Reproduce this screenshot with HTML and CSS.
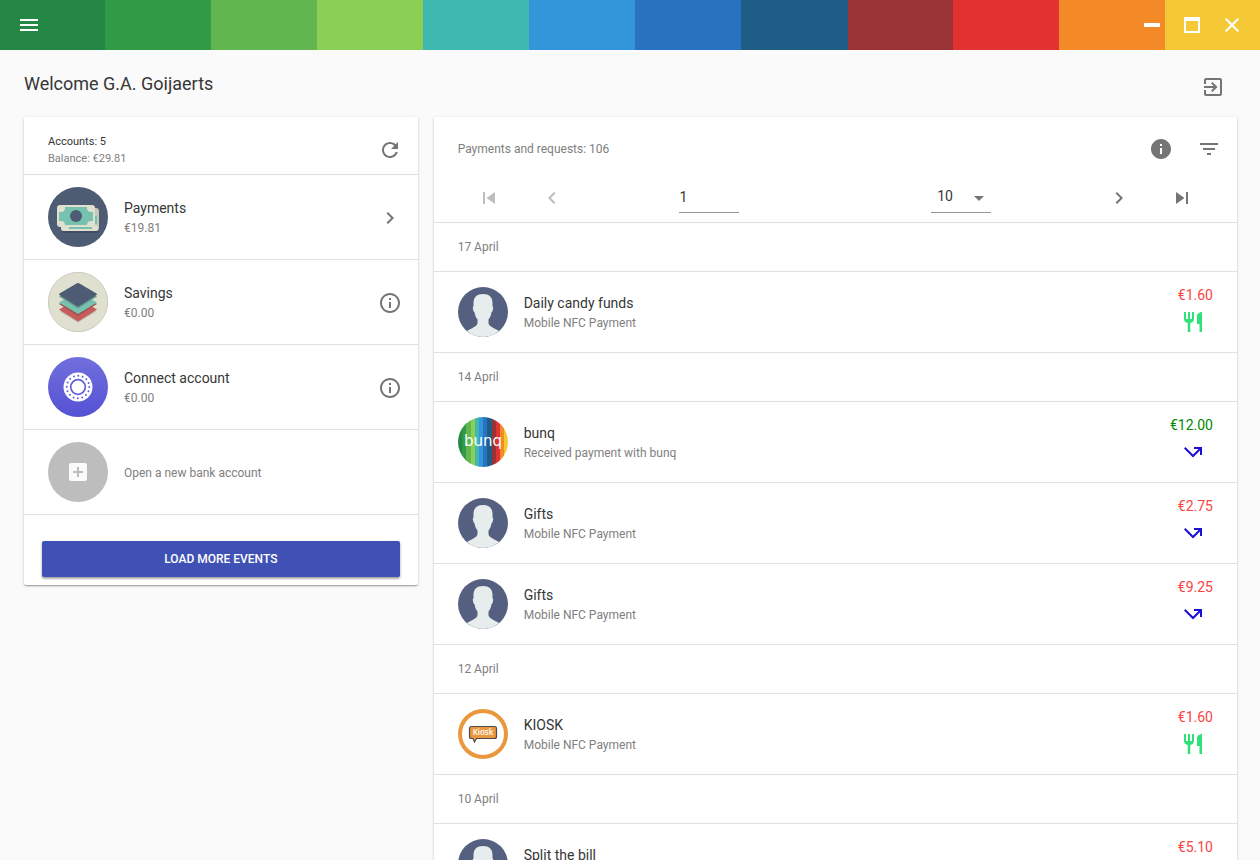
FILE: index.html
```html
<!DOCTYPE html>
<html lang="en">
<head>
<meta charset="utf-8">
<meta name="viewport" content="width=device-width, initial-scale=1">
<title>Dashboard</title>
<link rel="stylesheet" href="styles.css">
</head>
<body>
<svg class="sprite" width="0" height="0" aria-hidden="true">
  <symbol id="person" viewBox="0 0 50 50">
    <circle cx="25" cy="25" r="25" fill="#555f80"/>
    <path d="M25 7c-6 0-9.500 3-9.500 9v3.500c-.9.200-.8 1-.5 2.500.3 1.700.7 3 1.500 3.200.5 3.300 1.500 5.500 3 7.300V36c0 3-4.500 4.500-10.500 8A25 25 0 0 0 25 50a25 25 0 0 0 16-6c-6-3.500-10.500-5-10.500-8v-3.500c1.500-1.800 2.500-4 3-7.300.8-.2 1.200-1.500 1.500-3.200.3-1.500.4-2.300-.5-2.500V16c0-6-3.500-9-9.500-9z" fill="#e7eced"/>
  </symbol>
  <symbol id="food" viewBox="0 0 24 24"><path d="M11 9H9V2H7v7H5V2H3v7c0 2.120 1.660 3.840 3.750 3.970V22h2.500v-9.030C11.340 12.840 13 11.120 13 9V2h-2v7zm5-3v8h2.500v8H21V2c-2.760 0-5 2.240-5 4z"/></symbol>
  <symbol id="missed" viewBox="0 0 24 24"><path d="M3 8.410l9 9 7-7V15h2V7h-8v2h4.590L12 14.590 4.410 7 3 8.410z"/></symbol>
  <symbol id="info-outline" viewBox="0 0 24 24"><path d="M11 17h2v-6h-2v6zm1-15C6.480 2 2 6.480 2 12s4.480 10 10 10 10-4.480 10-10S17.520 2 12 2zm0 18c-4.410 0-8-3.590-8-8s3.590-8 8-8 8 3.590 8 8-3.590 8-8 8zM11 9h2V7h-2v2z"/></symbol>
  <symbol id="chevron-right" viewBox="0 0 24 24"><path d="M10 6L8.590 7.410 13.170 12l-4.580 4.590L10 18l6-6z"/></symbol>
</svg>

<header class="topbar">
  <button class="bar-button" type="button" aria-label="Menu"><svg class="icon" viewBox="0 0 24 24"><path d="M3 18h18v-2H3v2zm0-5h18v-2H3v2zm0-7v2h18V6H3z"/></svg></button>
  <div class="window-controls">
    <button class="bar-button" type="button" aria-label="Minimize"><svg class="icon" viewBox="0 0 24 24"><path d="M4 10h16v4H4z"/></svg></button>
    <button class="bar-button" type="button" aria-label="Maximize"><svg class="icon" viewBox="0 0 24 24"><path d="M4 4h16v16H4V4zm2 4v10h12V8H6z"/></svg></button>
    <button class="bar-button" type="button" aria-label="Close"><svg class="icon" viewBox="0 0 24 24"><path d="M19 6.410L17.590 5 12 10.590 6.410 5 5 6.410 10.590 12 5 17.590 6.410 19 12 13.410 17.590 19 19 17.590 13.410 12z"/></svg></button>
  </div>
</header>

<main class="page">
  <div class="welcome">
    <h1 class="welcome-title">Welcome G.A. Goijaerts</h1>
    <button class="icon-button" type="button" aria-label="Log out"><svg class="icon" viewBox="0 0 24 24"><path d="M10.090 15.590L11.500 17l5-5-5-5-1.410 1.410L12.670 11H3v2h9.670l-2.580 2.590zM19 3H5c-1.110 0-2 .9-2 2v4h2V5h14v14H5v-4H3v4c0 1.100.89 2 2 2h14c1.100 0 2-.9 2-2V5c0-1.100-.9-2-2-2z"/></svg></button>
  </div>

  <div class="columns">
    <section class="card accounts">
      <div class="accounts-header">
        <div class="summary">
          <p class="summary-count">Accounts: 5</p>
          <p class="summary-balance">Balance: €29.81</p>
        </div>
        <button class="icon-button" type="button" aria-label="Refresh"><svg class="icon" viewBox="0 0 24 24"><path d="M17.650 6.350C16.200 4.900 14.210 4 12 4c-4.420 0-7.990 3.580-7.990 8s3.570 8 7.990 8c3.730 0 6.840-2.550 7.730-6h-2.080c-.82 2.330-3.040 4-5.650 4-3.310 0-6-2.690-6-6s2.690-6 6-6c1.660 0 3.140.69 4.220 1.780L13 11h7V4l-2.350 2.350z"/></svg></button>
      </div>
      <ul class="list">
        <li class="account">
          <svg class="account-avatar" viewBox="0 0 60 60" aria-hidden="true">
            <circle cx="30" cy="30" r="30" fill="#4d5c73"/>
            <rect x="14" y="24" width="37" height="22" rx="3" fill="#414e63"/>
            <rect x="13" y="21" width="38" height="23" rx="3" fill="#c5c6b7"/>
            <rect x="13" y="38" width="37" height="6" rx="3" fill="#e0e0d1"/>
            <path d="M21 40h23v2H21zM47 29h2v8h-2z" fill="#76c2af"/>
            <rect x="9" y="18" width="38" height="22" rx="3" fill="#e0e0d1"/>
            <path d="M17 20h22a4 4 0 0 0 4 5h2v9h-2a4 4 0 0 0-4 4H17a4 4 0 0 0-4-4h-2v-9h2a4 4 0 0 0 4-5z" fill="#76c2af"/>
            <circle cx="28" cy="29" r="6" fill="#4d5c73"/>
          </svg>
          <div class="item-text"><p class="item-title">Payments</p><p class="item-note">€19.81</p></div>
          <button class="icon-button" type="button" aria-label="Open Payments"><svg class="icon"><use href="#chevron-right"/></svg></button>
        </li>
        <li class="account">
          <svg class="account-avatar" viewBox="0 0 60 60" aria-hidden="true">
            <circle cx="30" cy="30" r="29.700" fill="#e0e0d1" stroke="#b4b4ae" stroke-width=".6"/>
            <path d="M12 39.500l18-11 18 11-18 11z" fill="#b9b9ac"/>
            <path d="M11 37.500l19-11 19 11-19 12z" fill="#c75c5c"/>
            <path d="M11 32l19-11 19 11-19 12z" fill="#9c5354"/>
            <path d="M11 30.500l19-11 19 11-19 11.500z" fill="#76c2af"/>
            <path d="M11 24.500l19-11 19 11-19 12z" fill="#629b90"/>
            <path d="M11.500 21.500L28.500 11.500q1.500-1 3 0L48.500 21.500q1 .8 0 1.600L31.500 34q-1.500 1-3 0L11.500 23.100q-1-.8 0-1.600z" fill="#4d5c73"/>
          </svg>
          <div class="item-text"><p class="item-title">Savings</p><p class="item-note">€0.00</p></div>
          <button class="icon-button" type="button" aria-label="Savings details"><svg class="icon"><use href="#info-outline"/></svg></button>
        </li>
        <li class="account">
          <svg class="account-avatar" viewBox="0 0 60 60" aria-hidden="true">
            <defs><linearGradient id="violet" x1="0" y1="0" x2="0" y2="1"><stop offset="0" stop-color="#716fdc"/><stop offset="1" stop-color="#5551d5"/></linearGradient></defs>
            <circle cx="30" cy="30" r="30" fill="url(#violet)"/>
            <circle cx="30" cy="30" r="14.500" fill="#fff"/>
            <circle cx="30" cy="30" r="7.300" fill="none" stroke="#625fd8" stroke-width="1.700"/>
            <circle cx="30" cy="30" r="11.300" fill="none" stroke="#625fd8" stroke-width="2" stroke-linecap="round" stroke-dasharray="0 4.437"/>
          </svg>
          <div class="item-text"><p class="item-title">Connect account</p><p class="item-note">€0.00</p></div>
          <button class="icon-button" type="button" aria-label="Connect account details"><svg class="icon"><use href="#info-outline"/></svg></button>
        </li>
        <li class="account">
          <span class="account-avatar add-avatar"><svg class="icon" viewBox="0 0 24 24" aria-hidden="true"><path d="M19 3H5c-1.110 0-2 .9-2 2v14c0 1.100.89 2 2 2h14c1.100 0 2-.9 2-2V5c0-1.100-.9-2-2-2zm-2 10h-4v4h-2v-4H7v-2h4V7h2v4h4v2z"/></svg></span>
          <div class="item-text"><p class="item-note">Open a new bank account</p></div>
        </li>
      </ul>
      <div class="card-actions"><button class="load-button" type="button">Load more events</button></div>
    </section>

    <section class="card events">
      <div class="events-header">
        <p class="item-note events-count">Payments and requests: 106</p>
        <button class="icon-button" type="button" aria-label="Information"><svg class="icon" viewBox="0 0 24 24"><path d="M12 2C6.480 2 2 6.480 2 12s4.480 10 10 10 10-4.480 10-10S17.520 2 12 2zm1 15h-2v-6h2v6zm0-8h-2V7h2v2z"/></svg></button>
        <button class="icon-button" type="button" aria-label="Filter"><svg class="icon" viewBox="0 0 24 24"><path d="M10 18h4v-2h-4v2zM3 6v2h18V6H3zm3 7h12v-2H6v2z"/></svg></button>
      </div>
      <div class="pager">
        <button class="icon-button" type="button" aria-label="First page" disabled><svg class="icon" viewBox="0 0 24 24"><path d="M6 6h2v12H6zm3.500 6l8.500 6V6z"/></svg></button>
        <button class="icon-button" type="button" aria-label="Previous page" disabled><svg class="icon" viewBox="0 0 24 24"><path d="M15.410 7.410L14 6l-6 6 6 6 1.410-1.410L10.830 12z"/></svg></button>
        <span class="field-wrap">
          <input class="field" type="text" aria-label="Page" value="1">
        </span>
        <span class="field-wrap select-wrap">
          <select class="field field-select" aria-label="Items per page"><option>10</option><option>20</option><option>50</option></select>
        </span>
        <button class="icon-button" type="button" aria-label="Next page"><svg class="icon"><use href="#chevron-right"/></svg></button>
        <button class="icon-button" type="button" aria-label="Last page"><svg class="icon" viewBox="0 0 24 24"><path d="M6 18l8.500-6L6 6v12zM16 6v12h2V6h-2z"/></svg></button>
      </div>

      <ul class="list">
        <li class="date-row">17 April</li>
        <li class="event">
          <svg class="event-avatar" aria-hidden="true"><use href="#person"/></svg>
          <div class="item-text"><p class="item-title">Daily candy funds</p><p class="item-note">Mobile NFC Payment</p></div>
          <div class="amount-box"><span class="amount">€1.60</span><svg class="icon food"><use href="#food"/></svg></div>
        </li>
        <li class="date-row">14 April</li>
        <li class="event">
          <svg class="event-avatar" viewBox="0 0 50 50" role="img" aria-label="bunq logo">
            <defs><clipPath id="disc"><circle cx="25" cy="25" r="25"/></clipPath></defs>
            <g clip-path="url(#disc)">
              <path fill="#248746" d="M0 0h4v50H0z"/><path fill="#2f9b47" d="M4 0h5v50H4z"/><path fill="#61b650" d="M8 0h5v50H8z"/><path fill="#8bcf54" d="M13 0h4v50h-4z"/><path fill="#3fb8af" d="M17 0h4v50h-4z"/><path fill="#3396da" d="M21 0h4v50h-4z"/><path fill="#2773bf" d="M25 0h4v50h-4z"/><path fill="#1f5d86" d="M29 0h5v50h-5z"/><path fill="#993335" d="M34 0h4v50h-4z"/><path fill="#e13131" d="M38 0h4v50h-4z"/><path fill="#f38a27" d="M42 0h4v50h-4z"/><path fill="#f5c836" d="M46 0h4v50h-4z"/>
            </g>
            <text class="bunq-text" x="25" y="29" text-anchor="middle">bunq</text>
          </svg>
          <div class="item-text"><p class="item-title">bunq</p><p class="item-note">Received payment with bunq</p></div>
          <div class="amount-box"><span class="amount amount-in">€12.00</span><svg class="icon missed"><use href="#missed"/></svg></div>
        </li>
        <li class="event">
          <svg class="event-avatar" aria-hidden="true"><use href="#person"/></svg>
          <div class="item-text"><p class="item-title">Gifts</p><p class="item-note">Mobile NFC Payment</p></div>
          <div class="amount-box"><span class="amount">€2.75</span><svg class="icon missed"><use href="#missed"/></svg></div>
        </li>
        <li class="event">
          <svg class="event-avatar" aria-hidden="true"><use href="#person"/></svg>
          <div class="item-text"><p class="item-title">Gifts</p><p class="item-note">Mobile NFC Payment</p></div>
          <div class="amount-box"><span class="amount">€9.25</span><svg class="icon missed"><use href="#missed"/></svg></div>
        </li>
        <li class="date-row">12 April</li>
        <li class="event">
          <svg class="event-avatar" viewBox="0 0 50 50" role="img" aria-label="Kiosk logo">
            <circle cx="25" cy="25" r="23" fill="#fff" stroke="#ea983e" stroke-width="4"/>
            <path d="M13.500 17.500h23q2 0 2 2v8q0 2-2 2H18.500l-2 3.500-1.500-3.500h-1.500q-2 0-2-2v-8q0-2 2-2z" fill="#ea983e" stroke="#4b4b4b" stroke-width="1.200"/>
            <text class="kiosk-text" x="25" y="26" text-anchor="middle">Kiosk</text>
          </svg>
          <div class="item-text"><p class="item-title">KIOSK</p><p class="item-note">Mobile NFC Payment</p></div>
          <div class="amount-box"><span class="amount">€1.60</span><svg class="icon food"><use href="#food"/></svg></div>
        </li>
        <li class="date-row">10 April</li>
        <li class="event">
          <svg class="event-avatar" aria-hidden="true"><use href="#person"/></svg>
          <div class="item-text"><p class="item-title">Split the bill</p><p class="item-note">Mobile NFC Payment</p></div>
          <div class="amount-box"><span class="amount">€5.10</span><svg class="icon missed"><use href="#missed"/></svg></div>
        </li>
      </ul>
    </section>
  </div>
</main>
</body>
</html>
```
FILE: styles.css
```css
* { box-sizing: border-box; }

html { scrollbar-width: none; }

body {
  margin: 0;
  background: #fafafa;
  color: #363636;
  font-family: Roboto, "Liberation Sans", sans-serif;
  font-size: 14px;
  line-height: 20px;
}

p, h1, ul { margin: 0; padding: 0; }

button, input, select { font: inherit; color: inherit; }

.sprite { display: none; }

.icon {
  display: block;
  width: 24px;
  height: 24px;
  fill: currentColor;
}

.topbar {
  display: flex;
  align-items: center;
  justify-content: space-between;
  height: 50px;
  padding: 0 8px 0 9px;
  color: #fff;
  background: linear-gradient(to right,
    #248746 105px, #2f9b47 105px 211px, #61b650 211px 317px,
    #8bcf54 317px 423px, #3fb8af 423px 529px, #3396da 529px 635px,
    #2773bf 635px 741px, #1f5d86 741px 848px, #993335 848px 953px,
    #e13131 953px 1059px, #f38a27 1059px 1165px, #f5c836 1165px);
}

.window-controls { display: flex; }

.bar-button {
  display: grid;
  place-items: center;
  width: 40px;
  height: 40px;
  padding: 0;
  border: 0;
  background: none;
}

.page { padding: 13px 23px 24px 24px; }

.welcome {
  display: flex;
  justify-content: space-between;
  height: 54px;
}

.welcome-title {
  padding-top: 7px;
  font-size: 18px;
  font-weight: 400;
  line-height: 28px;
}

.icon-button {
  display: grid;
  flex: none;
  place-items: center;
  width: 48px;
  height: 48px;
  padding: 0;
  border: 0;
  background: none;
  color: #757575;
}

.icon-button:disabled { color: #bdbdbd; }

.columns {
  display: grid;
  grid-template-columns: repeat(12, 1fr);
  gap: 16px;
  align-items: start;
}

.card {
  border-radius: 2px;
  background: #fff;
  box-shadow: 0 1px 3px rgba(0, 0, 0, 0.2), 0 1px 1px rgba(0, 0, 0, 0.14), 0 2px 1px -1px rgba(0, 0, 0, 0.12);
}

.accounts { grid-column: span 4; }
.events { grid-column: span 8; }

.accounts-header {
  display: flex;
  justify-content: space-between;
  padding: 9px 4px 0 24px;
  border-bottom: 1px solid #e0e0e0;
}

.summary {
  padding-top: 7px;
  font-size: 11px;
  line-height: 17px;
}

.summary-balance { color: #808080; }

.list { list-style: none; }

.account {
  display: flex;
  align-items: center;
  gap: 16px;
  padding: 12px 4px 12px 24px;
  border-bottom: 1px solid #e0e0e0;
}

.account .icon-button { margin-top: 2px; }

.account-avatar {
  flex: none;
  width: 60px;
  height: 60px;
}

.add-avatar {
  display: grid;
  place-items: center;
  border-radius: 50%;
  background: #bdbdbd;
  color: #fafafa;
}

.item-text {
  flex: 1;
  padding-top: 2px;
}

.item-note {
  color: #808080;
  font-size: 12px;
}

.card-actions { padding: 26px 18px 8px; }

.load-button {
  display: block;
  width: 100%;
  height: 36px;
  border: 0;
  border-radius: 2px;
  background: #3f51b5;
  color: #fff;
  font-size: 12px;
  font-weight: 500;
  text-transform: uppercase;
  box-shadow: 0 1px 3px rgba(0, 0, 0, 0.25), 0 2px 2px rgba(0, 0, 0, 0.2);
}

.events-header {
  display: flex;
  align-items: center;
  padding: 8px 4px 0 24px;
}

.events-count { flex: 1; }

.pager {
  display: grid;
  grid-template-columns: 1fr 1fr 4fr 4fr 1fr 1fr;
  place-items: center;
  padding: 1px 24px 0;
  border-bottom: 1px solid #e0e0e0;
}

.field-wrap {
  position: relative;
  padding-bottom: 2px;
}

.field {
  display: block;
  width: 60px;
  height: 32px;
  padding: 0;
  border: 0;
  border-bottom: 1px solid #949494;
  border-radius: 0;
  background: none;
}

.select-wrap::after {
  position: absolute;
  top: 15px;
  right: 7px;
  border: 5px solid transparent;
  border-top-color: #757575;
  border-bottom: 0;
  content: "";
  pointer-events: none;
}

.field-select {
  appearance: none;
  padding: 0 24px 2px 6px;
}

.date-row {
  padding: 14px 24px;
  border-bottom: 1px solid #e0e0e0;
  color: #808080;
  font-size: 12px;
}

.event {
  display: flex;
  align-items: center;
  gap: 16px;
  padding: 15px 24px;
  border-bottom: 1px solid #e0e0e0;
}

.event-avatar {
  flex: none;
  width: 50px;
  height: 50px;
}

.amount-box {
  display: flex;
  flex-direction: column;
  align-items: flex-end;
  align-self: flex-start;
  gap: 7px;
  line-height: 16px;
}

.amount { color: #f9443f; }
.amount-in { color: #008a00; }

.amount-box .icon { margin-right: 8px; }

.food { color: #2ee27a; }
.missed { color: #1c0fd6; }

.bunq-text {
  fill: #fff;
  font-family: "DejaVu Sans", sans-serif;
  font-size: 15px;
}

.kiosk-text {
  fill: #fff;
  font-family: "Open Sans", sans-serif;
  font-size: 8px;
  font-weight: 600;
}
```
